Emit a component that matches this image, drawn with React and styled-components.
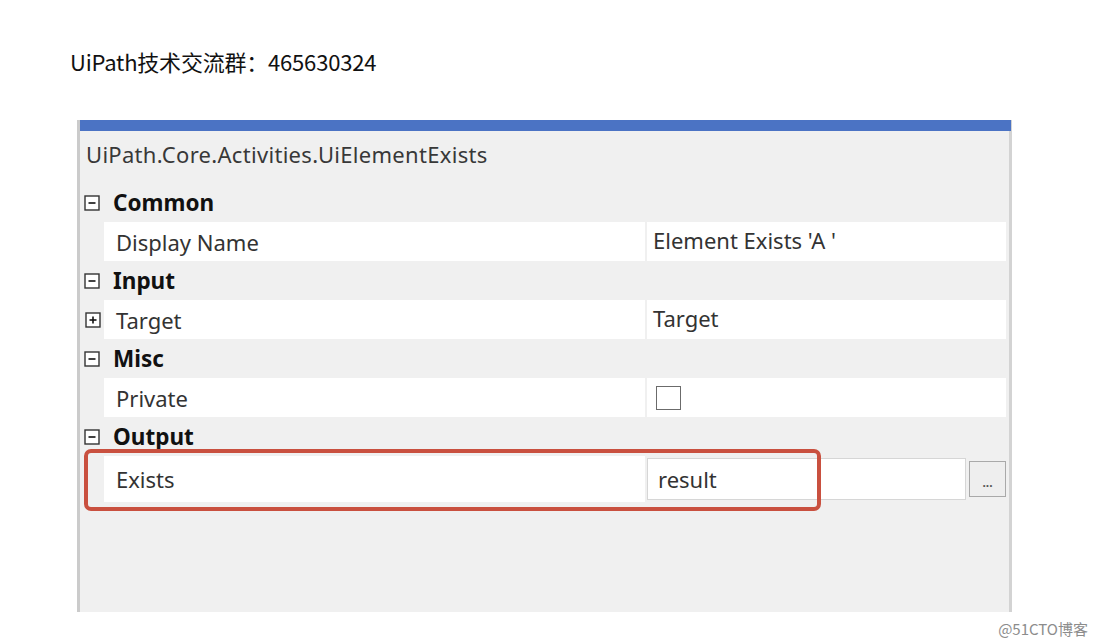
import React from "react"
import styled, { createGlobalStyle } from "styled-components"

const GlobalStyle = createGlobalStyle`
  body {
    margin: 0;
    background: #fff;
    font-family: "Noto Sans", "Liberation Sans", sans-serif;
  }
`

const Page = styled.div`
  width: 1096px;
  height: 644px;
  overflow: hidden;
  display: flex;
  flex-direction: column;
`

const Heading = styled.h1`
  margin: 0;
  padding: 48px 0 0 70px;
  font-family: "Noto Sans CJK SC", "Noto Sans", sans-serif;
  font-size: 22px;
  font-weight: 400;
  line-height: 26px;
  letter-spacing: -0.2px;
  color: #111;
`

const Panel = styled.div`
  margin: 46px 0 0 77px;
  width: 935px;
  height: 492px;
  box-sizing: border-box;
  border-left: 3px solid #cbcbcb;
  border-right: 3px solid #d3d3d3;
  background: #f0f0f0;
  display: flex;
  flex-direction: column;
`

const TitleBar = styled.div`
  height: 11px;
  background: #4b73c4;
  margin-right: -2px;
`

const TypeName = styled.div`
  height: 52px;
  padding: 0 0 6px 6px;
  box-sizing: border-box;
  display: flex;
  align-items: center;
  font-size: 22px;
  letter-spacing: 0.3px;
  color: #383838;
`

const CategoryRow = styled.div`
  height: 39px;
  padding-left: 4px;
  display: flex;
  align-items: center;
  gap: 13px;
  font-size: 22.5px;
  font-weight: 700;
  color: #111;
`

const PropertyRow = styled.div`
  position: relative;
  height: ${p => p.tall ? 46 : 39}px;
  display: flex;
  font-size: 22px;
  color: #333;
`

const Gutter = styled.div`
  width: 24px;
  padding-left: 5px;
  box-sizing: border-box;
  display: flex;
  align-items: center;
`

const NameCell = styled.div`
  width: 541px;
  background: #fff;
  padding-left: 12px;
  box-sizing: border-box;
  display: flex;
  align-items: center;
`

const ValueCell = styled.div`
  flex: 1;
  margin: 0 3px 0 2px;
  background: ${p => p.plain ? "transparent" : "#fff"};
  padding-left: ${p => p.plain ? 0 : 6}px;
  padding-bottom: ${p => p.plain ? 0 : 4}px;
  display: flex;
  align-items: center;
`

const TextBox = styled.div`
  flex: 1;
  height: 42px;
  box-sizing: border-box;
  background: #fff;
  border: 1px solid #d6d6d6;
  padding-left: 10px;
  display: flex;
  align-items: center;
`

const DotsButton = styled.div`
  width: 37px;
  height: 36px;
  margin-left: 3px;
  box-sizing: border-box;
  background: #eeeeee;
  border: 1px solid #a9a9a9;
  display: flex;
  align-items: flex-end;
  justify-content: center;
  padding-bottom: 9px;
  font-size: 12px;
  font-weight: 700;
  line-height: 8px;
  color: #555;
`

const CheckBox = styled.div`
  width: 25px;
  height: 24px;
  margin: 4px 0 0 3px;
  box-sizing: border-box;
  border: 1px solid #6b6b6b;
  background: #fff;
`

const Highlight = styled.div`
  position: absolute;
  left: 4px;
  top: -7px;
  width: 737px;
  height: 62px;
  box-sizing: border-box;
  border: 4px solid #c9503f;
  border-radius: 7px;
  pointer-events: none;
`

const Footer = styled.div`
  flex: 1;
  display: flex;
  justify-content: flex-end;
  align-items: center;
  padding-right: 8px;
  font-family: "Noto Sans CJK SC", sans-serif;
  font-size: 15px;
  color: #8c8c8c;
`

const ToggleBox = ({ open }) => (
  <svg width="16" height="16" viewBox="0 0 16 16">
    <rect x="1" y="1" width="14" height="14" fill="#fff" stroke="#333" strokeWidth="1.4" />
    <line x1="4.5" y1="8" x2="11.5" y2="8" stroke="#111" strokeWidth="1.6" />
    {!open && <line x1="8" y1="4.5" x2="8" y2="11.5" stroke="#111" strokeWidth="1.6" />}
  </svg>
)

const Category = ({ label }) => (
  <CategoryRow>
    <ToggleBox open />
    {label}
  </CategoryRow>
)

const App = () => (
  <Page>
    <GlobalStyle />
    <Heading>UiPath技术交流群：465630324</Heading>
    <Panel>
      <TitleBar />
      <TypeName>UiPath.Core.Activities.UiElementExists</TypeName>

      <Category label="Common" />
      <PropertyRow>
        <Gutter />
        <NameCell>Display Name</NameCell>
        <ValueCell>Element Exists 'A '</ValueCell>
      </PropertyRow>

      <Category label="Input" />
      <PropertyRow>
        <Gutter><ToggleBox /></Gutter>
        <NameCell>Target</NameCell>
        <ValueCell>Target</ValueCell>
      </PropertyRow>

      <Category label="Misc" />
      <PropertyRow>
        <Gutter />
        <NameCell>Private</NameCell>
        <ValueCell><CheckBox /></ValueCell>
      </PropertyRow>

      <Category label="Output" />
      <PropertyRow tall>
        <Gutter />
        <NameCell>Exists</NameCell>
        <ValueCell plain>
          <TextBox>result</TextBox>
          <DotsButton>...</DotsButton>
        </ValueCell>
        <Highlight />
      </PropertyRow>
    </Panel>
    <Footer>@51CTO博客</Footer>
  </Page>
)

export default App
